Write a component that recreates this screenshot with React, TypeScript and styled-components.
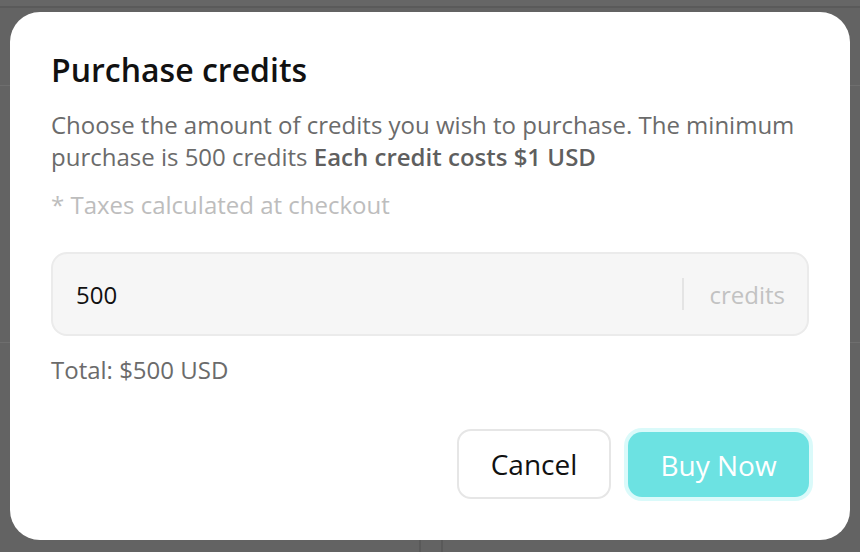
import { createGlobalStyle, styled } from "styled-components"

const GlobalStyle = createGlobalStyle`
  html, body {
    margin: 0;
    padding: 0;
    background: #636363;
    font-family: "Open Sans", "Noto Sans", sans-serif;
  }
  * {
    box-sizing: border-box;
  }
`

// the page behind the dimmed overlay
const BackPage = styled.div`
  width: 860px;
  height: 552px;
  display: flex;
  flex-direction: column;
  background: #636363;
`

const BackBar = styled.div`
  height: 8px;
  background: #666;
  border-bottom: 2px solid #5a5a5a;
`

const BackSection = styled.div<{ $height: number }>`
  height: ${(p) => p.$height}px;
  border-bottom: 1px solid #6e6e6e;
`

const BackColumns = styled.div`
  flex: 1;
  display: grid;
  grid-template-columns: 419px 22px 1fr;
  & > div + div {
    border-left: 2px solid #595959;
  }
`

const Overlay = styled.div`
  position: fixed;
  inset: 0;
  display: flex;
  align-items: flex-start;
  justify-content: center;
  padding-top: 12px;
`

const Modal = styled.div`
  width: 840px;
  height: 528px;
  background: #fff;
  border-radius: 30px;
  padding: 38px 41px 41px 41px;
  display: flex;
  flex-direction: column;
`

const Title = styled.h2`
  margin: 0;
  font-size: 32px;
  line-height: 40px;
  font-weight: 600;
  color: #111;
`

const Description = styled.p`
  margin: 19px 0 0 0;
  font-size: 24px;
  line-height: 32px;
  color: #6b6b6b;

  strong {
    font-weight: 600;
    color: #5f5f5f;
  }
`

const Note = styled.p`
  margin: 16px 0 0 0;
  font-size: 24px;
  line-height: 32px;
  color: #bdbdbd;
`

const InputBox = styled.label`
  margin-top: 31px;
  height: 84px;
  display: flex;
  align-items: center;
  background: #f6f6f6;
  border: 2px solid #ebebeb;
  border-radius: 16px;
  padding: 0 22px 0 23px;
`

const AmountInput = styled.input`
  flex: 1;
  min-width: 0;
  border: none;
  outline: none;
  background: transparent;
  font-family: inherit;
  font-size: 24px;
  color: #111;
  padding: 0;
`

const Divider = styled.span`
  width: 2px;
  height: 32px;
  background: #e4e4e4;
  margin: 0 25px 0 0;
`

const Unit = styled.span`
  font-size: 24px;
  color: #c2c2c2;
`

const Total = styled.p`
  margin: 18px 0 0 0;
  font-size: 24px;
  line-height: 32px;
  color: #6b6b6b;
`

const Actions = styled.div`
  margin-top: auto;
  display: flex;
  justify-content: flex-end;
  gap: 17px;
`

const Button = styled.button<{ $primary?: boolean }>`
  height: 70px;
  padding: 0 30px;
  border-radius: 14px;
  font-family: inherit;
  font-size: 28px;
  cursor: pointer;
  ${(p) =>
    p.$primary
      ? `
    min-width: 181px;
    height: 65px;
    margin-top: 3px;
    background: #6ce2e2;
    color: #fff;
    border: none;
    box-shadow: 0 0 0 4px #dafafa;
  `
      : `
    min-width: 154px;
    background: #fff;
    color: #111;
    border: 2px solid #e6e6e6;
  `}
`

export default function App() {
  return (
    <>
      <GlobalStyle />
      <BackPage>
        <BackBar />
        <BackSection $height={78} />
        <BackSection $height={257} />
        <BackColumns>
          <div />
          <div />
          <div />
        </BackColumns>
      </BackPage>
      <Overlay>
        <Modal>
          <Title>Purchase credits</Title>
          <Description>
            Choose the amount of credits you wish to purchase. The minimum
            purchase is 500 credits <strong>Each credit costs $1 USD</strong>
          </Description>
          <Note>* Taxes calculated at checkout</Note>
          <InputBox>
            <AmountInput type="text" defaultValue="500" />
            <Divider />
            <Unit>credits</Unit>
          </InputBox>
          <Total>Total: $500 USD</Total>
          <Actions>
            <Button>Cancel</Button>
            <Button $primary>Buy Now</Button>
          </Actions>
        </Modal>
      </Overlay>
    </>
  )
}
